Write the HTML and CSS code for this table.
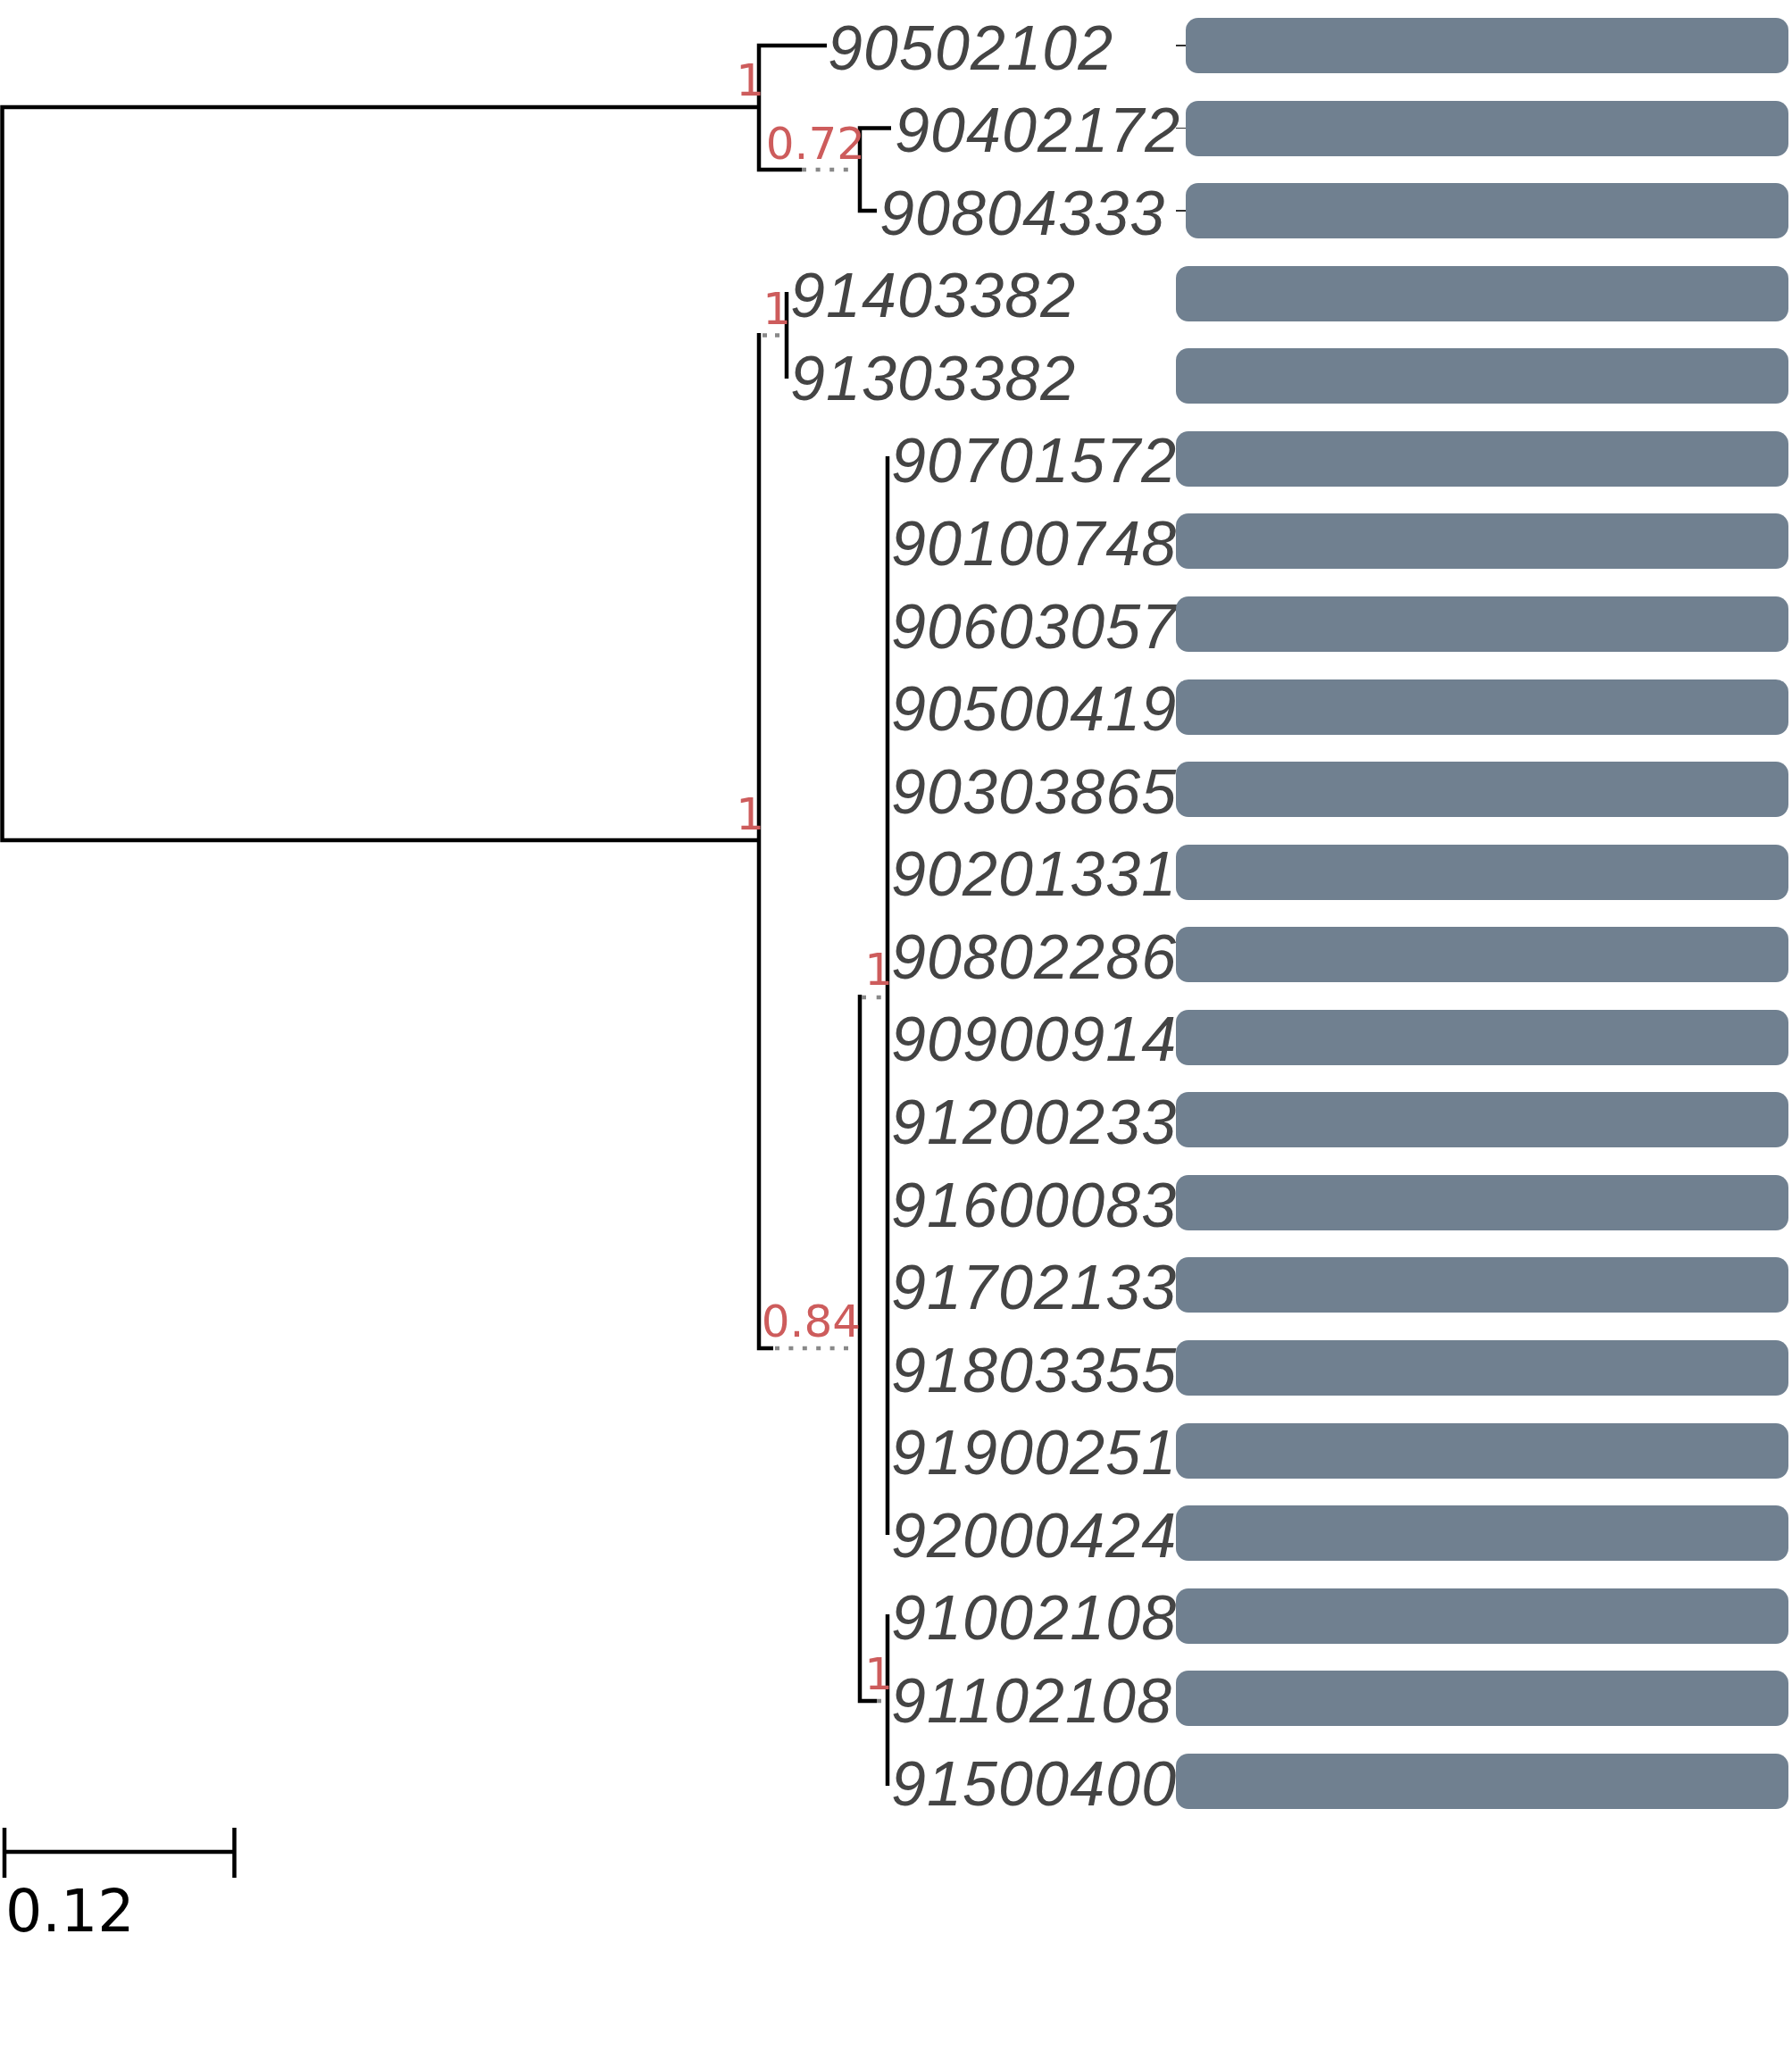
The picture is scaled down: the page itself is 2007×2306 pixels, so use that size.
FILE: index.html
```html
<!DOCTYPE html>
<html lang="en">
<head>
<meta charset="utf-8">
<title>Phylogenetic tree</title>
<link rel="stylesheet" href="styles.css">
</head>
<body>
<main class="figure">
  <div class="tree-row">
    <svg class="tree" width="1317" height="2040" viewBox="0 0 1317 2040">
      <!-- solid branches -->
      <g class="branch">
        <path d="M852 120 H2.5 V941 H852"/>
        <path d="M926 51 H850 V190 H866"/>
        <path d="M998 143.6 H963 V236.1 H982"/>
        <path d="M850 373 V1510 H866"/>
        <path d="M881 327 V424"/>
        <path d="M963 1114 V1905 H982"/>
        <path d="M994 511 V1719"/>
        <path d="M994 1808 V2000"/>
      </g>
      <!-- dotted extensions -->
      <g class="dotted">
        <path d="M866 190 H898" class="solid-part"/>
        <path d="M898 190 H951" class="dots" style="stroke-dasharray:5 10.6"/>
        <path d="M854 375.5 H874" class="dots" style="stroke-dasharray:5 9"/>
        <path d="M868 1510 H951" class="dots" style="stroke-dasharray:5 10.4"/>
        <path d="M965 1117 H987" class="dots" style="stroke-dasharray:5 11.7"/>
        <path d="M982 1905 H987" class="dots"/>
      </g>
      <!-- support values -->
      <g class="support">
        <text x="856" y="107">1</text>
        <text x="969" y="177.7">0.72</text>
        <text x="886" y="362.7">1</text>
        <text x="856" y="929">1</text>
        <text x="964" y="1496.7">0.84</text>
        <text x="1000" y="1103">1</text>
        <text x="1000" y="1891.7">1</text>
      </g>
      <!-- leaf names -->
      <g class="leaf">
        <text x="927" y="77.5">90502102</text>
        <text x="1002" y="170.1">90402172</text>
        <text x="985" y="262.6">90804333</text>
        <text x="885" y="355.2">91403382</text>
        <text x="885" y="447.8">91303382</text>
        <text x="998" y="540.4">90701572</text>
        <text x="998" y="632.9">90100748</text>
        <text x="998" y="725.5">90603057</text>
        <text x="998" y="818.1">90500419</text>
        <text x="998" y="910.6">90303865</text>
        <text x="998" y="1003.2">90201331</text>
        <text x="998" y="1095.8">90802286</text>
        <text x="998" y="1188.4">90900914</text>
        <text x="998" y="1280.9">91200233</text>
        <text x="998" y="1373.5">91600083</text>
        <text x="998" y="1466.1">91702133</text>
        <text x="998" y="1558.6">91803355</text>
        <text x="998" y="1651.2">91900251</text>
        <text x="998" y="1743.8">92000424</text>
        <text x="998" y="1836.3">91002108</text>
        <text x="998" y="1928.9">91102108</text>
        <text x="998" y="2021.5">91500400</text>
      </g>
    </svg>
    <div class="bars">
      <div class="bar-row"><span class="tick"></span><span class="bar"></span></div>
      <div class="bar-row"><span class="tick"></span><span class="bar"></span></div>
      <div class="bar-row"><span class="tick"></span><span class="bar"></span></div>
      <div class="bar-row"><span class="bar"></span></div>
      <div class="bar-row"><span class="bar"></span></div>
      <div class="bar-row"><span class="bar"></span></div>
      <div class="bar-row"><span class="bar"></span></div>
      <div class="bar-row"><span class="bar"></span></div>
      <div class="bar-row"><span class="bar"></span></div>
      <div class="bar-row"><span class="bar"></span></div>
      <div class="bar-row"><span class="bar"></span></div>
      <div class="bar-row"><span class="bar"></span></div>
      <div class="bar-row"><span class="bar"></span></div>
      <div class="bar-row"><span class="bar"></span></div>
      <div class="bar-row"><span class="bar"></span></div>
      <div class="bar-row"><span class="bar"></span></div>
      <div class="bar-row"><span class="bar"></span></div>
      <div class="bar-row"><span class="bar"></span></div>
      <div class="bar-row"><span class="bar"></span></div>
      <div class="bar-row"><span class="bar"></span></div>
      <div class="bar-row"><span class="bar"></span></div>
      <div class="bar-row"><span class="bar"></span></div>
    </div>
  </div>
  <div class="scale">
    <svg class="scale-bar" width="270" height="56" viewBox="0 0 270 56">
      <path d="M3 27 H262.5 M5 0 V56 M262.5 0 V56"/>
    </svg>
    <span class="scale-label">0.12</span>
  </div>
</main>
</body>
</html>
```
FILE: styles.css
```css
html, body {
  margin: 0;
  padding: 0;
  background: #ffffff;
}

.figure {
  width: 2007px;
  display: flex;
  flex-direction: column;
}

.tree-row {
  display: flex;
  align-items: flex-start;
}

.tree {
  display: block;
  flex: none;
  overflow: visible;
}

.branch path {
  fill: none;
  stroke: #000000;
  stroke-width: 4.5;
  stroke-linejoin: miter;
}

.dotted path {
  fill: none;
  stroke-width: 4.5;
}

.dotted .solid-part {
  stroke: #000000;
}

.dotted .dots {
  stroke: #888888;
}

.support text {
  font-family: "DejaVu Sans", sans-serif;
  font-size: 50px;
  fill: #cd5c5c;
  text-anchor: end;
}

.leaf text {
  font-family: "Liberation Sans", Arial, sans-serif;
  font-style: italic;
  font-size: 70px;
  letter-spacing: 1.1px;
  fill: #444444;
}

.bars {
  width: 686px;
  padding-top: 20px;
  display: flex;
  flex-direction: column;
  gap: 30.571px;
}

.bar-row {
  height: 62px;
  display: flex;
  align-items: center;
}

.tick {
  flex: none;
  width: 11px;
  height: 1.5px;
  background: #333333;
}

.bar {
  flex: 1;
  height: 62px;
  background: #708090;
  border-radius: 14px;
}

.scale {
  margin-top: 7px;
  display: flex;
  flex-direction: column;
  align-items: flex-start;
}

.scale-bar {
  display: block;
}

.scale-bar path {
  fill: none;
  stroke: #000000;
  stroke-width: 4.5;
}

.scale-label {
  display: block;
  margin-top: 5px;
  padding-left: 6px;
  font-family: "DejaVu Sans", sans-serif;
  font-size: 65px;
  line-height: 65px;
  color: #000000;
}
```
